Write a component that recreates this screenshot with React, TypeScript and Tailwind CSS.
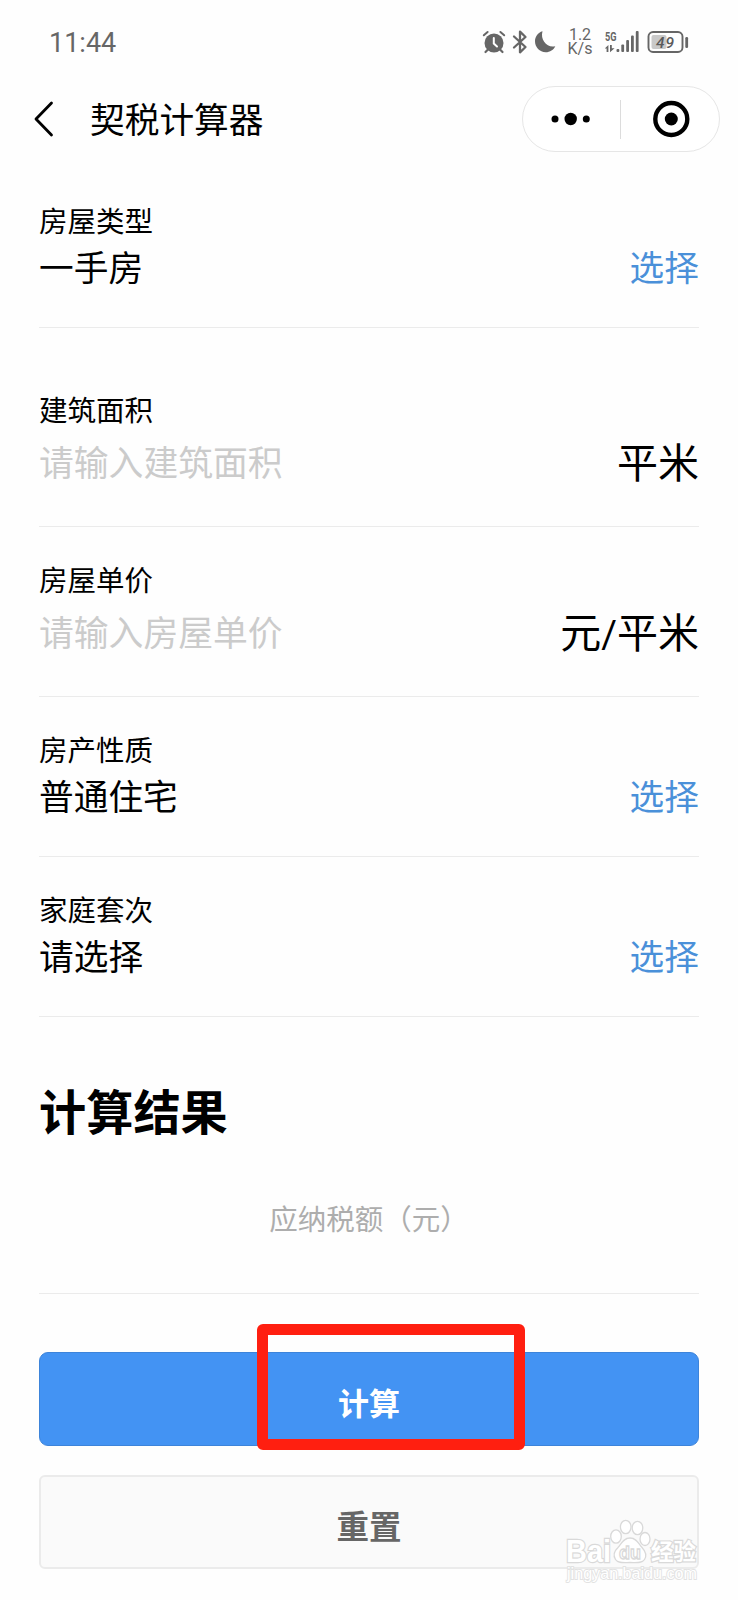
import React, { useState } from "react";

type Field = {
  id: string;
  label: string;
  value?: string;
  placeholder?: string;
  unit?: React.ReactNode;
  className: string;
};

const fields: Field[] = [
  { id: "type", label: "房屋类型", value: "一手房", className: "h-[160px]" },
  { id: "area", label: "建筑面积", placeholder: "请输入建筑面积", unit: "平米", className: "h-[199px]" },
  {
    id: "price",
    label: "房屋单价",
    placeholder: "请输入房屋单价",
    unit: (
      <>
        元<span className="font-[Roboto,sans-serif] text-[38px] leading-none">/</span>平米
      </>
    ),
    className: "h-[170px]",
  },
  { id: "nature", label: "房产性质", value: "普通住宅", className: "h-[160px]" },
  { id: "count", label: "家庭套次", value: "请选择", className: "h-[160px]" },
];

function StatusBar() {
  return (
    <div className="flex h-[84px] items-center pl-[49px] pr-[49px] font-[Roboto,sans-serif] text-[#666]">
      <span className="pt-[2px] text-[27px] leading-none">11:44</span>
      <div className="ml-auto flex items-center">
        {/* alarm */}
        <svg width="24" height="24" viewBox="0 0 24 24" fill="none">
          <circle cx="12" cy="13" r="9.500" fill="#666" />
          <path d="M1.800 5.300 5.600 2M22.200 5.300 18.400 2" stroke="#666" strokeWidth="2" strokeLinecap="round" />
          <path d="M6 19.500 3.500 22M18 19.500 20.500 22" stroke="#666" strokeWidth="2.200" strokeLinecap="round" />
          <path d="M11.800 8v5.500l3.200 3" stroke="#fff" strokeWidth="2" strokeLinecap="round" />
        </svg>
        {/* bluetooth */}
        <svg className="ml-[6px]" width="16" height="24" viewBox="0 0 16 24" fill="none" stroke="#666" strokeWidth="2.300" strokeLinejoin="round" strokeLinecap="round">
          <path d="M2 6.500 13.500 17 8 22.300V1.700l5.500 5.300L2 17.500" />
        </svg>
        {/* do not disturb */}
        <svg className="ml-[6px]" width="22" height="24" viewBox="0 0 22 24">
          <path d="M8.500 1.300C4 2.500 1 6.700 1 11.300 1 17.200 5.700 22.200 11.700 22.200c4.300 0 8-2.500 9.600-6-7.800 2.200-15.400-6-12.800-14.900Z" fill="#666" />
        </svg>
        <div className="ml-[12px] flex w-[24px] flex-col items-center text-[16px] leading-[14px]">
          <span>1.2</span>
          <span>K/s</span>
        </div>
        {/* signal */}
        <svg className="ml-[13px]" width="35" height="24" viewBox="0 0 35 24" fill="#666">
          <text x="0" y="10.500" fontSize="12.500" fontWeight="700" textLength="11.500" lengthAdjust="spacingAndGlyphs">5G</text>
          <path d="M0 18.200 3.400 15v7H1.600v-3.400H0ZM5 15h1.800v3.200H9.600L5 22.200Z" />
          <rect x="11.500" y="19" width="2.800" height="3" rx="1" />
          <rect x="16.300" y="14.500" width="2.800" height="7.500" rx="1" />
          <rect x="21.200" y="10" width="2.800" height="12" rx="1" />
          <rect x="26" y="5.500" width="2.800" height="16.500" rx="1" />
          <rect x="30.800" y="1" width="2.800" height="21" rx="1" />
        </svg>
        <svg className="ml-[7px]" width="42" height="24" viewBox="0 0 42 24">
          <rect x="1.500" y="2" width="34" height="20" rx="4.500" fill="none" stroke="#666" strokeWidth="1.900" />
          <rect x="4.500" y="5" width="15" height="14" rx="2" fill="#c9c9c9" />
          <rect x="38.300" y="7" width="2.800" height="11" rx="1.200" fill="#666" />
          <text x="18" y="17.500" fontSize="15.500" fontWeight="500" fontStyle="italic" textAnchor="middle" fill="#5a5a5a" textLength="18">49</text>
        </svg>
      </div>
    </div>
  );
}

function NavBar() {
  return (
    <div className="flex h-[70px] items-center pl-[34px] pr-[18px]">
      <svg width="20" height="38" viewBox="0 0 20 38" fill="none" stroke="#000" strokeWidth="2.800" strokeLinecap="round" strokeLinejoin="round">
        <path d="M17.500 3 2 19l15.500 16" />
      </svg>
      <h1 className="ml-[36px] pb-[3px] text-[34.700px] leading-[40px] font-normal">契税计算器</h1>
      <div className="ml-auto flex h-[66px] w-[198px] items-center rounded-full border-[1.500px] border-[#e6e6e6] bg-white">
        <svg width="97" height="40" viewBox="0 0 97 40">
          <circle cx="32" cy="20" r="3.500" />
          <circle cx="47.700" cy="20" r="6.200" />
          <circle cx="63.300" cy="20" r="3.500" />
        </svg>
        <div className="h-[39px] w-px bg-[#dcdcdc]" />
        <svg width="97" height="40" viewBox="0 0 97 40">
          <circle cx="50.300" cy="20" r="16" fill="none" stroke="#000" strokeWidth="4.400" />
          <circle cx="50.300" cy="20" r="6.500" />
        </svg>
      </div>
    </div>
  );
}

function FieldRow({ field }: { field: Field }) {
  const [text, setText] = useState("");
  const isInput = !!field.placeholder;

  return (
    <div className={`flex flex-col justify-end border-b border-[#ebebeb] ${field.className}`}>
      <div className="text-[28.500px] leading-[40px]">{field.label}</div>
      <div className={`flex items-center justify-between ${isInput ? "h-[63px] mb-[34px]" : "h-[51px] mb-[36px]"}`}>
        {isInput ? (
          <>
            <input
              className="h-[50px] w-[300px] bg-transparent text-[34.800px] leading-[50px] outline-none placeholder:text-[#cbcbcb]"
              placeholder={field.placeholder}
              value={text}
              onChange={(e) => setText(e.target.value)}
            />
            <span className="pb-[2px] text-[41px] leading-[50px] whitespace-nowrap">{field.unit}</span>
          </>
        ) : (
          <>
            <span className="text-[34.700px] leading-[50px]">{field.value}</span>
            <button className="text-[34.700px] leading-[50px] text-[#4a90d9]">选择</button>
          </>
        )}
      </div>
    </div>
  );
}

function Watermark() {
  return (
    <svg className="absolute left-[560px] top-[1512px]" width="144" height="76" viewBox="0 0 144 76" fill="#fff" stroke="#d9d9d9" strokeWidth="1.300">
      <text x="6" y="49.500" fontSize="31" fontFamily="Liberation Sans, sans-serif" fontWeight="700" paintOrder="stroke" strokeWidth="2.400" textLength="45" lengthAdjust="spacingAndGlyphs">Bai</text>
      <ellipse cx="56" cy="24.500" rx="5.300" ry="6.700" />
      <ellipse cx="65.700" cy="15" rx="5.300" ry="6.700" />
      <ellipse cx="77.500" cy="16" rx="5.300" ry="6.700" />
      <ellipse cx="85" cy="27" rx="5" ry="6.500" />
      <path d="M70 26c-7 0-8.500 6-12 9.500-4 3.800-5 8-2.500 12 2.500 4 8 3 14.500 3s12 1 14.500-3c2.500-4 1-8.200-2.500-12C78.500 32 77 26 70 26Z" />
      <text x="59" y="47" fontSize="19" fontFamily="Liberation Sans, sans-serif" fontWeight="700" textLength="22" lengthAdjust="spacingAndGlyphs">du</text>
      <text x="91" y="48" fontSize="22.500" fontFamily="Noto Sans CJK SC, sans-serif" fontWeight="700" paintOrder="stroke" strokeWidth="2.400">经验</text>
      <text x="7" y="67" fontSize="16" fontFamily="Liberation Sans, sans-serif" paintOrder="stroke" strokeWidth="1.800" stroke="#e2e2e2" textLength="130" lengthAdjust="spacingAndGlyphs">jingyan.baidu.com</text>
    </svg>
  );
}

export default function App() {
  return (
    <div className="relative h-[1600px] w-[738px] overflow-hidden bg-[#fefefe] font-['Noto_Sans_CJK_SC',sans-serif] text-black">
      <StatusBar />
      <NavBar />
      <main className="px-[39px] pt-[14px]">
        {fields.map((field) => (
          <FieldRow key={field.id} field={field} />
        ))}

        <section className="flex h-[277px] flex-col border-b border-[#ebebeb]">
          <h2 className="mt-[61px] text-[47.200px] leading-[64px] font-bold">计算结果</h2>
          <p className="mt-[56px] text-center text-[28.500px] leading-[40px] text-[#adadad]">应纳税额（元）</p>
        </section>

        <div className="relative mt-[58px]">
          <button className="block h-[94px] w-full rounded-[9px] border border-[#3d84da] bg-[#4393f3] pt-[5px] text-[31px] leading-[40px] font-bold text-white">
            计算
          </button>
          <div className="pointer-events-none absolute -top-[28px] left-[218px] h-[126px] w-[268px] rounded-[6px] border-[11px] border-[#ff1f10]" />
        </div>
        <button className="mt-[29px] block h-[94px] w-full rounded-[6px] border-2 border-[#ebebeb] bg-[#fafafa] pt-[6px] text-[32.500px] leading-[40px] font-bold text-[#666]">
          重置
        </button>
      </main>
      <Watermark />
    </div>
  );
}
